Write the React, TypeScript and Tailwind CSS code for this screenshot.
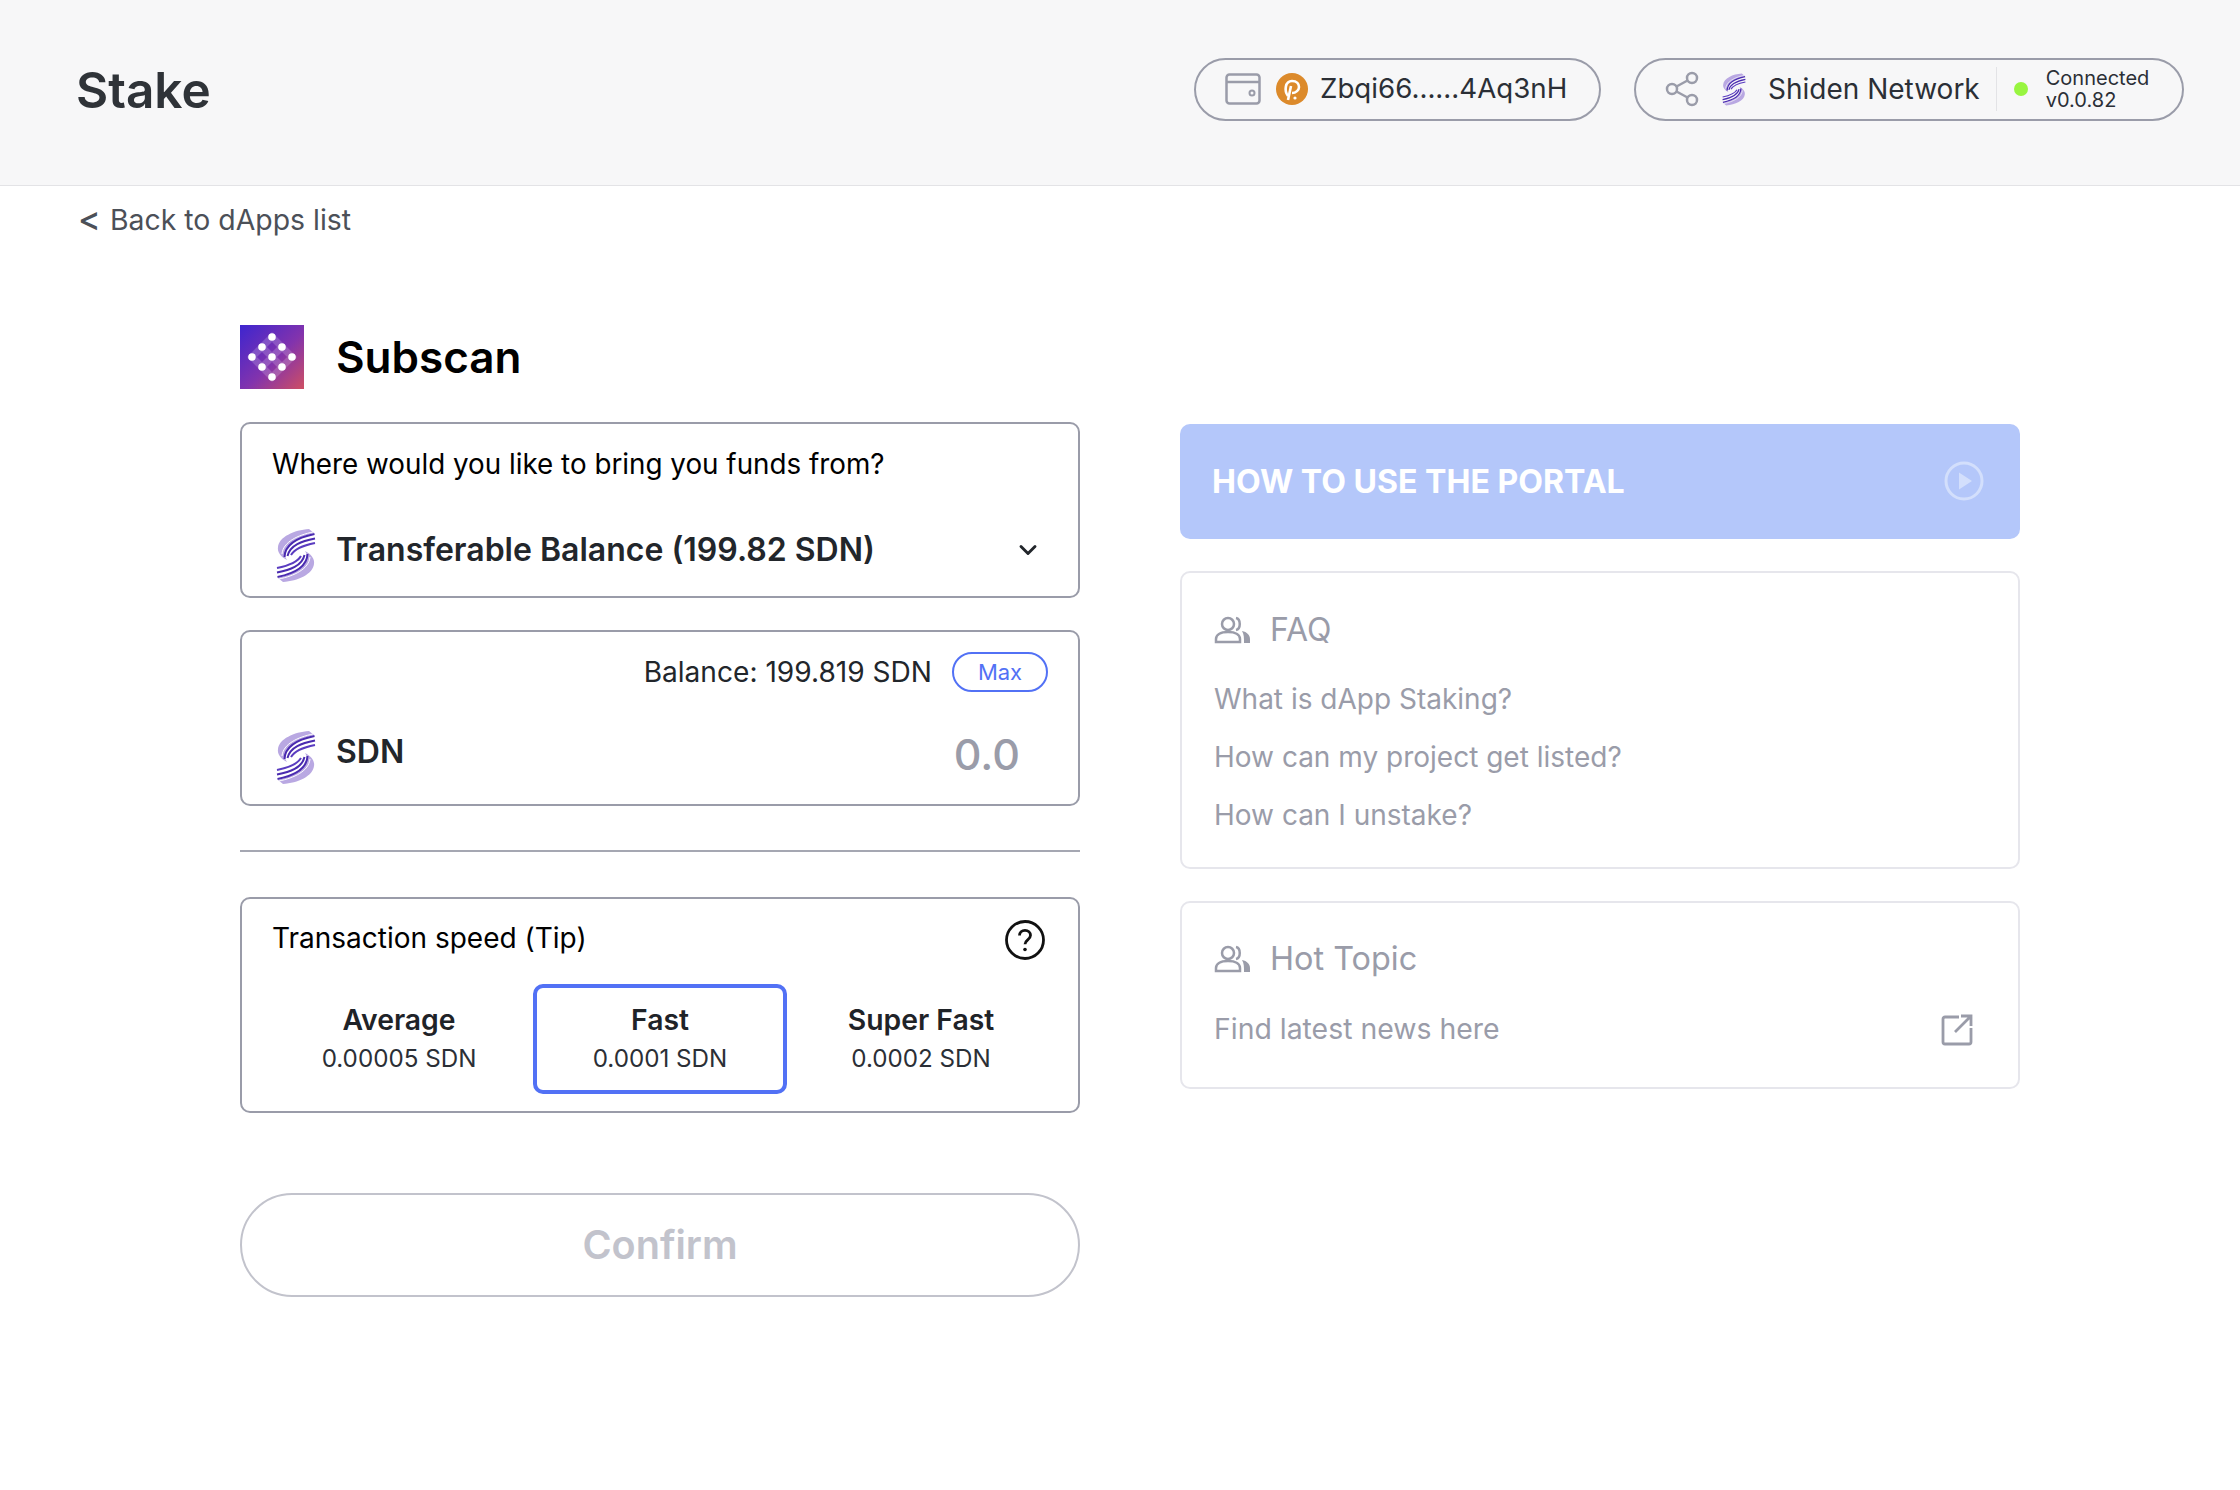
import { ChevronDown } from "lucide-react";

const inter = { fontFamily: "Inter, sans-serif" };

function ShidenLobe() {
    return (
        <>
            <path d="M33 1C18 2 3 9 2 19c-1 5 3 10 9 13C5 23 12 12 38 5Z" fill="#b9a8e2" />
            <path d="M37 4C22 7 7 14 6 26" stroke="#ffffff" strokeWidth="1" />
            <path d="M38.5 6C24 9 9 15 8.5 29" stroke="#4a2bb0" strokeWidth="2" />
            <path d="M39 10.5C26 13 14 17 11.5 28" stroke="#4a2bb0" strokeWidth="2" />
            <path d="M39 15C29 17 19 20 15 27" stroke="#5a3cc0" strokeWidth="2" />
        </>
    );
}

function ShidenLogo({ width = 40 }: { width?: number }) {
    return (
        <svg width={width} height={width * 1.375} viewBox="0 0 40 55" fill="none" className="shrink-0">
            <ShidenLobe />
            <g transform="rotate(180 20 27.5)">
                <ShidenLobe />
            </g>
        </svg>
    );
}

function PeopleIcon() {
    return (
        <svg width="38" height="28" viewBox="0 0 38 28" fill="none" className="shrink-0">
            <circle cx="14" cy="8" r="6" stroke="#9a9ca9" strokeWidth="2.5" />
            <path d="M22 2c5 1 5 11 0 12" stroke="#9a9ca9" strokeWidth="2.5" />
            <path d="M2 26v-3c0-4 4-7 12-7s12 3 12 7v3Z" stroke="#9a9ca9" strokeWidth="2.5" />
            <path d="M28 15c5 1 8 4 8 8v4h-6c0-5 0-9-2-12Z" fill="#9a9ca9" />
        </svg>
    );
}

function SubscanLogo() {
    const dots = [
        [32, 12], [22, 22], [42, 22], [12, 32], [32, 32], [52, 32], [22, 42], [42, 42], [32, 52],
    ];
    return (
        <svg width="64" height="64" viewBox="0 0 64 64" className="shrink-0">
            <defs>
                <linearGradient id="subscan" x1="0" y1="0" x2="1" y2="1">
                    <stop offset="0" stopColor="#3d25cf" />
                    <stop offset="0.55" stopColor="#8233ad" />
                    <stop offset="1" stopColor="#cf4f63" />
                </linearGradient>
            </defs>
            <rect width="64" height="64" fill="url(#subscan)" />
            <path d="M32 12 52 32 32 52 12 32Z" fill="none" stroke="#ffffff" strokeOpacity="0.18" strokeWidth="7" />
            <path d="M22 22 42 42M42 22 22 42" stroke="#ffffff" strokeOpacity="0.18" strokeWidth="7" />
            {dots.map(([x, y]) => (
                <circle key={`${x}-${y}`} cx={x} cy={y} r="3.8" fill="#ffffff" />
            ))}
        </svg>
    );
}

function SpeedOption({ name, tip, active }: { name: string; tip: string; active?: boolean }) {
    return (
        <div className={`w-[254px] h-[110px] rounded-[10px] border-[4px] flex flex-col items-center justify-center ${active ? "border-[#5271f5]" : "border-transparent"}`}>
            <div className="text-[28.3px] leading-[40px] font-semibold text-[#1f2328]">{name}</div>
            <div className="text-[24.2px] leading-[38px] text-[#2b2f36]">{tip}</div>
        </div>
    );
}

function App() {
    return (
        <div className="min-h-[1490px] bg-white" style={inter}>
            {/* header */}
            <header className="h-[186px] bg-[#f7f7f8] border-b border-[#e3e3e6] pl-[76px] pr-[56px] pb-[7px] flex items-center justify-between">
                <h1 className="mt-[2px] text-[49.5px] font-semibold text-[#2f3338]">Stake</h1>
                <div className="flex items-center gap-[33px]">
                    <div className="w-[407px] h-[63px] rounded-full border-2 border-[#9a9ca9] flex items-center pl-[29px]">
                        <svg width="36" height="32" viewBox="0 0 36 32" fill="none" className="shrink-0">
                            <rect x="1.5" y="1.5" width="33" height="29" rx="3" stroke="#9a9ca9" strokeWidth="2.5" />
                            <path d="M2 9h32" stroke="#9a9ca9" strokeWidth="2.5" />
                            <circle cx="27" cy="20" r="2.5" stroke="#9a9ca9" strokeWidth="2" />
                        </svg>
                        <svg width="32" height="32" viewBox="0 0 32 32" fill="none" className="ml-[15px] shrink-0">
                            <circle cx="16" cy="16" r="16" fill="#dc8a2b" />
                            <path d="M12 23C8 18 9 8 16 8c5 0 7 3 7 6s-3 6-7 6" stroke="#ffffff" strokeWidth="2.6" />
                            <path d="M15 13 12 27" stroke="#ffffff" strokeWidth="2.6" />
                            <circle cx="19" cy="25" r="1.6" fill="#ffffff" />
                        </svg>
                        <span className="ml-[12px] text-[27.7px] text-[#2b2f36] whitespace-nowrap">Zbqi66......4Aq3nH</span>
                    </div>
                    <div className="w-[550px] h-[63px] rounded-full border-2 border-[#9a9ca9] flex items-center pl-[29px]">
                        <svg width="34" height="36" viewBox="0 0 34 36" fill="none" className="shrink-0">
                            <circle cx="27" cy="7" r="5" stroke="#9a9ca9" strokeWidth="2.5" />
                            <circle cx="7" cy="18" r="5" stroke="#9a9ca9" strokeWidth="2.5" />
                            <circle cx="27" cy="29" r="5" stroke="#9a9ca9" strokeWidth="2.5" />
                            <path d="M11.5 15.5 22.5 9.5M11.5 20.5 22.5 26.5" stroke="#9a9ca9" strokeWidth="2.5" />
                        </svg>
                        <span className="ml-[23px]"><ShidenLogo width={24} /></span>
                        <span className="ml-[22px] text-[28px] text-[#2b2f36] whitespace-nowrap">Shiden Network</span>
                        <span className="ml-[16px] w-px h-[44px] bg-[#e3e3e6]" />
                        <span className="ml-[17px] w-[14px] h-[14px] rounded-full bg-[#98f540]" />
                        <div className="ml-[18px] text-[20px] leading-[22px] text-[#2b2f36]">
                            <div>Connected</div>
                            <div>v0.0.82</div>
                        </div>
                    </div>
                </div>
            </header>

            {/* back link */}
            <div className="pl-[78px] pt-[16px] h-[70px] flex items-start gap-[11px] text-[28.4px] leading-[36px] text-[#4c5058]">
                <span className="w-[21px] text-[34px] leading-[34px] font-medium">&lt;</span>
                <span>Back to dApps list</span>
            </div>

            <main className="pl-[240px] pt-[69px]">
                <div className="flex items-center gap-[32px] h-[64px]">
                    <SubscanLogo />
                    <h2 className="text-[44px] font-semibold text-black">Subscan</h2>
                </div>

                <div className="mt-[33px] flex gap-[100px] items-start">
                    {/* left column */}
                    <div className="w-[840px]">
                        <div className="h-[176px] rounded-[10px] border-2 border-[#9a9ca9] pt-[20px] pl-[34px] pr-[36px]">
                            <div className="-ml-[4px] text-[27.8px] leading-[40px] text-black">Where would you like to bring you funds from?</div>
                            <div className="mt-[44px] flex items-start h-[55px]">
                                <ShidenLogo />
                                <span className="-mt-[2px] ml-[20px] text-[32px] leading-[48px] font-semibold text-[#22262b] whitespace-nowrap">Transferable Balance (199.82 SDN)</span>
                                <ChevronDown className="ml-auto mt-[8px]" size={28} color="#22262b" strokeWidth={2.5} />
                            </div>
                        </div>

                        <div className="mt-[32px] h-[176px] rounded-[10px] border-2 border-[#9a9ca9] pt-[20px] pl-[34px] pr-[30px]">
                            <div className="flex items-center justify-end h-[40px]">
                                <span className="text-[28.1px] text-[#22262b]">Balance: 199.819 SDN</span>
                                <span className="ml-[20px] w-[96px] h-[40px] rounded-full border-2 border-[#5271f5] text-[#5271f5] text-[22px] flex items-center justify-center">Max</span>
                            </div>
                            <div className="mt-[38px] flex items-start h-[55px]">
                                <ShidenLogo />
                                <span className="-mt-[2px] ml-[20px] text-[32px] leading-[48px] font-semibold text-[#22262b]">SDN</span>
                                <span className="ml-auto mr-[28px] -mt-[6px] text-[43px] leading-[60px] font-medium text-[#9a9ca9]">0.0</span>
                            </div>
                        </div>

                        <div className="mt-[44px] h-[2px] bg-[#a5a7b2]" />

                        <div className="mt-[45px] h-[216px] rounded-[10px] border-2 border-[#9a9ca9] pt-[19px] pl-[30px] pr-[33px]">
                            <div className="flex justify-between items-start h-[48px]">
                                <span className="text-[28px] leading-[40px] text-black">Transaction speed (Tip)</span>
                                <svg width="40" height="40" viewBox="0 0 40 40" fill="none" className="mt-[2px]">
                                    <circle cx="20" cy="20" r="18.5" stroke="#111" strokeWidth="2.8" />
                                    <path d="M14.5 15.5c0-3.2 2.4-5.2 5.5-5.2s5.5 2 5.5 5c0 4.6-5.5 4.6-5.5 9" stroke="#111" strokeWidth="2.8" />
                                    <circle cx="20" cy="29.5" r="1.8" fill="#111" />
                                </svg>
                            </div>
                            <div className="mt-[18px] -ml-[30px] -mr-[33px] flex justify-center gap-[7px]">
                                <SpeedOption name="Average" tip="0.00005 SDN" />
                                <SpeedOption name="Fast" tip="0.0001 SDN" active />
                                <SpeedOption name="Super Fast" tip="0.0002 SDN" />
                            </div>
                        </div>

                        <div className="mt-[80px] h-[104px] pt-[2px] rounded-full border-2 border-[#c2c3cc] flex items-center justify-center text-[39.6px] font-semibold text-[#c2c3cc]">Confirm</div>
                    </div>

                    {/* right column */}
                    <div className="w-[840px] pt-[2px]">
                        <div className="h-[115px] pt-[1px] rounded-[10px] bg-[#b4c7fa] pl-[32px] pr-[36px] flex items-center justify-between">
                            <span className="text-[32.1px] font-bold text-white">HOW TO USE THE PORTAL</span>
                            <svg width="40" height="40" viewBox="0 0 40 40" fill="none" className="-mt-[3px]">
                                <circle cx="20" cy="20" r="18" stroke="#d3dffc" strokeWidth="3" />
                                <path d="M15 11.5 28 20 15 28.5Z" fill="#d3dffc" />
                            </svg>
                        </div>

                        <div className="mt-[32px] h-[298px] rounded-[10px] border-2 border-[#e6e6ec] pt-[37px] px-[32px]">
                            <div className="flex items-center gap-[18px] h-[40px]">
                                <PeopleIcon />
                                <span className="text-[32px] text-[#9a9ca9]">FAQ</span>
                            </div>
                            <div className="mt-[31px] flex flex-col gap-[22px] text-[28px] leading-[36px] text-[#9a9ca9]">
                                <div>What is dApp Staking?</div>
                                <div>How can my project get listed?</div>
                                <div>How can I unstake?</div>
                            </div>
                        </div>

                        <div className="mt-[32px] h-[188px] rounded-[10px] border-2 border-[#e6e6ec] pt-[36px] px-[32px]">
                            <div className="flex items-center gap-[18px] h-[40px]">
                                <PeopleIcon />
                                <span className="text-[32.4px] text-[#9a9ca9]">Hot Topic</span>
                            </div>
                            <div className="mt-[32px] flex items-center justify-between pr-[13px]">
                                <span className="text-[28.4px] leading-[36px] text-[#9a9ca9]">Find latest news here</span>
                                <svg width="32" height="32" viewBox="0 0 32 32" fill="none" className="mt-[1px]">
                                    <path d="M18 3H4a2 2 0 0 0-2 2v23a2 2 0 0 0 2 2h24a2 2 0 0 0 2-2V14" stroke="#9a9ca9" strokeWidth="2.8" />
                                    <path d="M14 18 29 3M20 2h10v10" stroke="#9a9ca9" strokeWidth="2.8" />
                                </svg>
                            </div>
                        </div>
                    </div>
                </div>
            </main>
        </div>
    );
}

export default App;
